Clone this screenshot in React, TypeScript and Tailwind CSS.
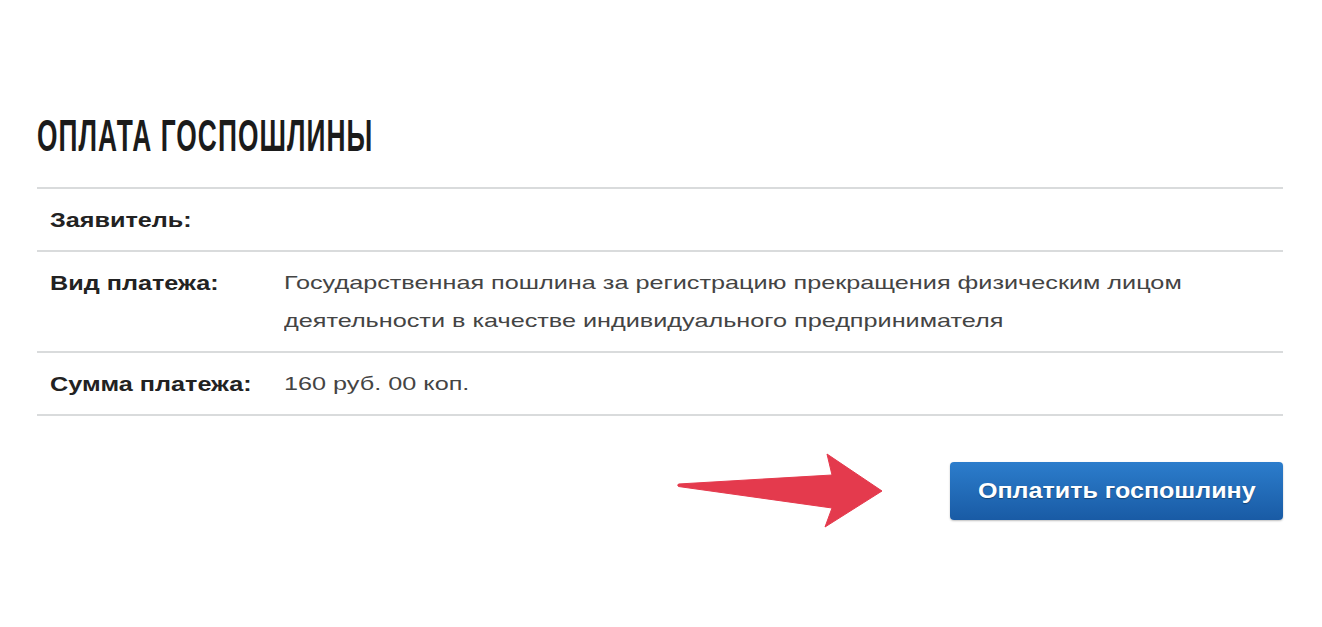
// The reference screenshot is horizontally stretched, so text is widened with scale-x to keep its proportions.
const rows = [
  { label: 'Заявитель:', value: '' },
  {
    label: 'Вид платежа:',
    value: 'Государственная пошлина за регистрацию прекращения физическим лицом деятельности в качестве индивидуального предпринимателя',
  },
  { label: 'Сумма платежа:', value: '160 руб. 00 коп.' },
]

function Arrow() {
  return (
    <svg width="208" height="77" viewBox="0 0 208 77" className="shrink-0">
      <path
        d="M2.5 32 L156 23 L151 2 L206 39 L149 75 L156 56 L2.5 34.5 Q1 33.2 2.5 32 Z"
        fill="#e43a4d"
        stroke="#e43a4d"
        strokeWidth="1"
        strokeLinejoin="round"
      />
    </svg>
  )
}

export default function App() {
  return (
    <div className="min-h-[627px] bg-white pt-[113px] pl-[37px] pr-[39px] font-['Liberation_Sans',Arial,sans-serif]">
      <h1 className="mb-[29px] text-[45px] font-bold leading-none tracking-[0.04em] text-[#1b1b1b]">
        <span className="inline-block origin-left scale-x-[0.585]">ОПЛАТА ГОСПОШЛИНЫ</span>
      </h1>

      <div className="border-t-2 border-[#d9dbdc]">
        {rows.map((row) => (
          <div key={row.label} className="grid grid-cols-[234px_1fr] border-b-2 border-[#d9dbdc] pt-3 pb-[11px] pl-[13px] leading-[38px]">
            <div className="text-[21px] font-bold text-[#222]">
              <span className="inline-block origin-left scale-x-[1.2]">{row.label}</span>
            </div>
            <div className="w-[752px] min-h-[38px] origin-left scale-x-[1.328] text-[19px] text-[#444]">
              {row.value}
            </div>
          </div>
        ))}
      </div>

      <div className="mt-[36px] flex items-center justify-end gap-[66px]">
        <Arrow />
        <button
          type="button"
          className="flex h-[58px] w-[333px] items-center justify-center rounded-[4px] bg-linear-to-b from-[#2c7dcc] to-[#195ba5] text-[22px] font-bold text-white shadow-[0_1px_2px_rgba(0,0,0,0.25)]"
        >
          <span className="inline-block scale-x-[1.14] [text-shadow:0_1px_1px_rgba(0,0,0,0.35)]">Оплатить госпошлину</span>
        </button>
      </div>
    </div>
  )
}
